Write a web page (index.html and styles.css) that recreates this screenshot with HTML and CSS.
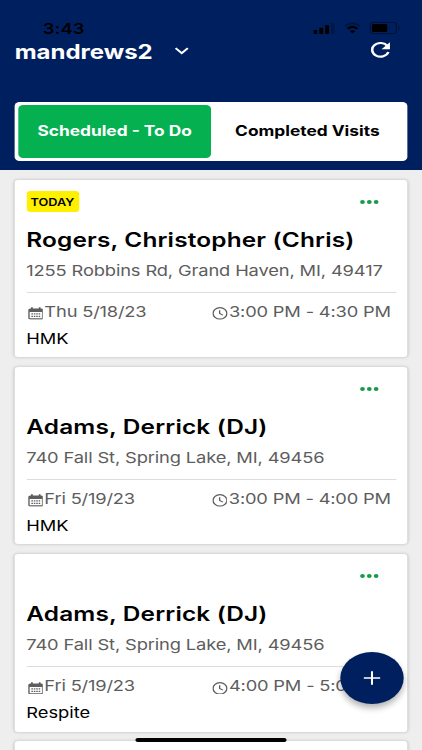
FILE: index.html
```
<!DOCTYPE html>
<html lang="en">
<head>
    <meta charset="UTF-8">
    <meta name="viewport" content="width=device-width, initial-scale=1.0">
    <title>Visits</title>
    <link rel="stylesheet" href="styles.css">
</head>
<body>
    <!-- Shared icons -->
    <svg class="icon-defs" width="0" height="0">
        <symbol id="calendar" viewBox="0 0 14 14">
            <path d="M3.5 0.3v3M10.5 0.3v3" stroke="currentColor" stroke-width="1.6" fill="none"/>
            <rect x="0.8" y="2.3" width="12.4" height="10.9" rx="1.2" fill="none" stroke="currentColor" stroke-width="1.3"/>
            <path d="M1 2.3h12v3.2H1z" fill="currentColor"/>
            <path d="M3 7.7h8M3 10.4h8" stroke="currentColor" stroke-width="1.4" stroke-dasharray="1.4 .8" fill="none"/>
        </symbol>
        <symbol id="clock" viewBox="0 0 14 14">
            <circle cx="7" cy="7" r="6.3" fill="none" stroke="currentColor" stroke-width="1.3"/>
            <path d="M6.7 3.5v3.7l3 1.8" fill="none" stroke="currentColor" stroke-width="1.2"/>
        </symbol>
        <symbol id="dots" viewBox="0 0 16 4">
            <circle cx="2.2" cy="2" r="1.95"/><circle cx="7.8" cy="2" r="1.95"/><circle cx="13.4" cy="2" r="1.95"/>
        </symbol>
    </svg>

    <div class="app">
        <header class="header">
            <div class="status-bar">
                <span class="time">3:43</span>
                <div class="status-icons">
                    <svg width="18" height="12" viewBox="0 0 18 12"><rect x="0" y="8" width="3.2" height="4" rx=".7"/><rect x="4.8" y="5.7" width="3.2" height="6.3" rx=".7"/><rect x="9.6" y="3" width="3.2" height="9" rx=".7"/><rect x="14.4" y="1" width="3" height="11" rx=".7" opacity=".25"/></svg>
                    <svg width="14" height="12" viewBox="0 0 14 12"><path d="M.8 4.2Q7-1.5 13.2 4.2" fill="none" stroke="#000" stroke-width="1.8" opacity=".35"/><path d="M3 6.7Q7 3 11 6.7" fill="none" stroke="#000" stroke-width="2"/><path d="M4.7 9Q7 7.3 9.3 9L7 11.5z"/></svg>
                    <svg width="25" height="12" viewBox="0 0 25 12"><rect x=".5" y=".5" width="21.5" height="11" rx="2.5" fill="none" stroke="#000" opacity=".4"/><rect x="2" y="2" width="12.5" height="8" rx="1"/><path d="M23.5 4v4q1.2-.6 1.2-2t-1.2-2z" opacity=".4"/></svg>
                </div>
            </div>
            <div class="title-bar">
                <span class="user">mandrews2</span>
                <svg class="chevron" width="12" height="8" viewBox="0 0 12 8"><path d="M1 1.2l5 5 5-5" fill="none" stroke="#fff" stroke-width="1.8"/></svg>
                <svg class="refresh" width="16" height="16" viewBox="0 0 16 16"><path d="M13.7 4.2A6.8 6.8 0 1 0 14.4 10" fill="none" stroke="#fff" stroke-width="2.1"/><path d="M15.7.3v6.9H8.8z" fill="#fff"/></svg>
            </div>
            <div class="tabs">
                <button class="tab active"><span class="tab-label">Scheduled - To Do</span></button>
                <button class="tab"><span class="tab-label">Completed Visits</span></button>
            </div>
        </header>

        <main class="visits">
            <article class="card">
                <div class="card-top"><span class="badge"><span class="badge-text">TODAY</span></span><svg class="dots"><use href="#dots"/></svg></div>
                <h2 class="name"><span>Rogers, Christopher (Chris)</span></h2>
                <p class="address"><span>1255 Robbins Rd, Grand Haven, MI, 49417</span></p>
                <div class="when">
                    <div class="date"><svg class="icon"><use href="#calendar"/></svg><span>Thu 5/18/23</span></div>
                    <div class="hours"><svg class="icon"><use href="#clock"/></svg><span>3:00 PM - 4:30 PM</span></div>
                </div>
                <p class="service"><span>HMK</span></p>
            </article>
            <article class="card">
                <div class="card-top"><svg class="dots"><use href="#dots"/></svg></div>
                <h2 class="name"><span>Adams, Derrick (DJ)</span></h2>
                <p class="address"><span>740 Fall St, Spring Lake, MI, 49456</span></p>
                <div class="when">
                    <div class="date"><svg class="icon"><use href="#calendar"/></svg><span>Fri 5/19/23</span></div>
                    <div class="hours"><svg class="icon"><use href="#clock"/></svg><span>3:00 PM - 4:00 PM</span></div>
                </div>
                <p class="service"><span>HMK</span></p>
            </article>
            <article class="card">
                <div class="card-top"><svg class="dots"><use href="#dots"/></svg></div>
                <h2 class="name"><span>Adams, Derrick (DJ)</span></h2>
                <p class="address"><span>740 Fall St, Spring Lake, MI, 49456</span></p>
                <div class="when">
                    <div class="date"><svg class="icon"><use href="#calendar"/></svg><span>Fri 5/19/23</span></div>
                    <div class="hours"><svg class="icon"><use href="#clock"/></svg><span>4:00 PM - 5:00 PM</span></div>
                </div>
                <p class="service"><span>Respite</span></p>
            </article>
            <article class="card"></article>
        </main>

        <button class="fab" aria-label="Add visit"><svg width="14" height="14" viewBox="0 0 14 14"><path d="M7 .2v13.6M.2 7h13.6" stroke="#fff" stroke-width="1.7"/></svg></button>
        <div class="home-bar"></div>
    </div>
</body>
</html>
```
FILE: styles.css
```
* { margin: 0; padding: 0; box-sizing: border-box; }
body { width: 422px; height: 750px; overflow: hidden; background: #eee; font-family: Inter, "Liberation Sans", sans-serif; }
svg { display: block; flex: none; }
.icon-defs { position: absolute; }

/* 346px wide layout stretched across the full window */
.app { position: relative; width: 346px; height: 750px; overflow: hidden; background: #eee; transform: scaleX(1.21965); transform-origin: 0 0; }

.header { height: 170px; padding: 22px 12px 0; background: #001f5f; }
.status-bar { display: flex; justify-content: space-between; height: 14px; padding: 0 6px 0 23px; }
.time { font-size: 15px; line-height: 14px; font-weight: 600; letter-spacing: 0.1px; color: #000; }
.status-icons { display: flex; gap: 7px; }
.title-bar { display: flex; align-items: center; height: 30px; padding-right: 14px; }
.user { padding-top: 1px; font-size: 19.7px; line-height: 30px; font-weight: 700; color: #fff; }
.chevron { margin: -1px 0 0 18px; }
.refresh { margin: -2px 0 0 auto; }
.tabs { display: flex; height: 59px; margin-top: 36px; padding: 3px; background: #fff; border-radius: 4px; }
.tab { flex: 1; padding-bottom: 2px; border: none; border-radius: 4px; background: none; color: #000; font: 700 14.2px/50px Inter, sans-serif; white-space: nowrap; }
.tab.active { background: #04b04f; color: #fff; }

.visits { display: flex; flex-direction: column; gap: 9.8px; padding: 9.5px 12px 0; }
.card { flex: none; height: 177.5px; padding: 11px 9.5px 0; background: #fff; border-radius: 3px; box-shadow: 0 0 3px rgba(0, 0, 0, 0.22); color: #000; white-space: nowrap; }
.card-top { display: flex; align-items: center; height: 22px; }
.badge { width: 43px; height: 21px; border-radius: 3px; background: #fff000; font-size: 10.4px; line-height: 23px; font-weight: 600; text-align: center; }
.dots { width: 16px; height: 4px; margin: 0 14px 0 auto; fill: #159b49; }
.name { height: 30px; margin-top: 12px; font-size: 20px; line-height: 31px; font-weight: 600; letter-spacing: 0.14px; }
.address { height: 30px; font-size: 15px; line-height: 32px; letter-spacing: -0.11px; color: #5d5d5d; }
.when { display: flex; justify-content: space-between; height: 34px; margin-top: 7px; padding-right: 4px; border-top: 1px solid #ddd; font-size: 15px; line-height: 38px; letter-spacing: -0.15px; color: #5d5d5d; }
.date, .hours { display: flex; align-items: flex-start; }
.icon { width: 12.7px; height: 12.7px; margin: 14.5px 1.2px 0 1px; }
.service { font-size: 15px; line-height: 26px; }

.fab { position: absolute; right: 15px; top: 652px; display: flex; align-items: center; justify-content: center; width: 52px; height: 52px; border: none; border-radius: 50%; background: #001f5f; box-shadow: 0 4px 6px rgba(0, 0, 0, 0.3); }
.home-bar { position: absolute; left: 111px; top: 738px; width: 124px; height: 4px; border-radius: 2px; background: #000; }
```
